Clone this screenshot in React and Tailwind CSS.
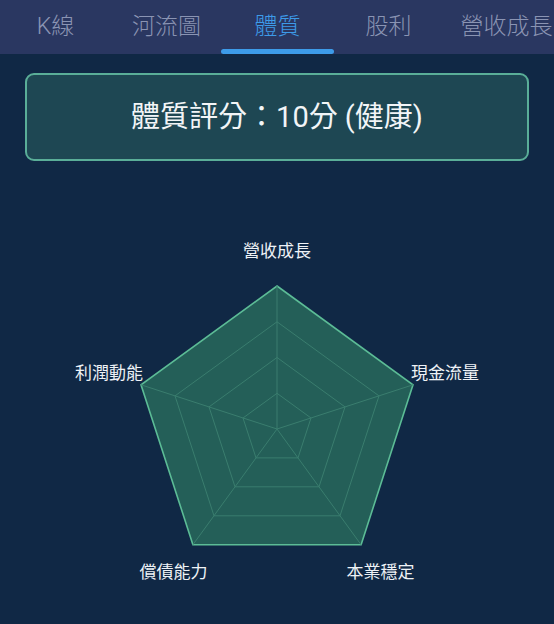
import React from 'react';

const tabs = ['K線', '河流圖', '體質', '股利', '營收成長'];
const axes = [
  { label: '營收成長' },
  { label: '現金流量' },
  { label: '本業穩定' },
  { label: '償債能力' },
  { label: '利潤動能' },
];

const CX = 277;
const CY = 268;
const R = 143;

function point(i, scale) {
  const a = (-90 + i * 72) * (Math.PI / 180);
  return [CX + R * scale * Math.cos(a), CY + R * scale * Math.sin(a)];
}

function ring(scale) {
  return axes.map((_, i) => point(i, scale).map((v) => v.toFixed(1)).join(',')).join(' ');
}

function Radar() {
  return (
    <svg width="554" height="463" viewBox="0 0 554 463" className="block">
      <polygon points={ring(1)} fill="#245f58" stroke="#5cbc96" strokeWidth="1.6" />
      {[0.25, 0.5, 0.75].map((s) => (
        <polygon key={s} points={ring(s)} fill="none" stroke="#3a7d6e" strokeWidth="1" />
      ))}
      {axes.map((_, i) => {
        const [x, y] = point(i, 1);
        return <line key={i} x1={CX} y1={CY} x2={x} y2={y} stroke="#3a7d6e" strokeWidth="1" />;
      })}
      <g fill="#eef2f6" fontSize="17" fontFamily='"Noto Sans CJK TC", "Noto Sans", sans-serif'>
        <text x="277" y="88" textAnchor="middle" dominantBaseline="central">營收成長</text>
        <text x="411" y="210" textAnchor="start" dominantBaseline="central">現金流量</text>
        <text x="380.5" y="409" textAnchor="middle" dominantBaseline="central">本業穩定</text>
        <text x="173.5" y="409" textAnchor="middle" dominantBaseline="central">償債能力</text>
        <text x="143" y="210" textAnchor="end" dominantBaseline="central">利潤動能</text>
      </g>
    </svg>
  );
}

export default function App() {
  const active = 2;
  return (
    <div
      className="w-[554px] h-[624px] overflow-hidden bg-[#102845]"
      style={{ fontFamily: 'Roboto, "Noto Sans CJK TC", sans-serif' }}
    >
      <div className="h-[54px] bg-[#2a3761] flex overflow-hidden">
        {tabs.map((t, i) => (
          <div
            key={t}
            className={`relative shrink-0 flex items-center justify-center ${
              i === tabs.length - 1 ? 'w-[125px]' : 'w-[111px]'
            }`}
          >
            <span
              className={`text-[23px] font-light leading-none whitespace-nowrap -mt-[1px] ${
                i === active ? 'text-[#3d9be9]' : 'text-[#8a94b3]'
              }`}
            >
              {t}
            </span>
            {i === active && (
              <div className="absolute bottom-0 left-[-1px] right-[-1px] h-[5px] rounded-full bg-[#3d9be9]" />
            )}
          </div>
        ))}
      </div>

      <div className="mt-[19px] mx-[25px] w-[504px] h-[88px] rounded-[9px] border-2 border-[#5aae98] bg-[#1e4753] flex items-center justify-center">
        <span className="text-[29px] text-[#f2f5f7] leading-none">體質評分：10分 (健康)</span>
      </div>

      <Radar />
    </div>
  );
}
